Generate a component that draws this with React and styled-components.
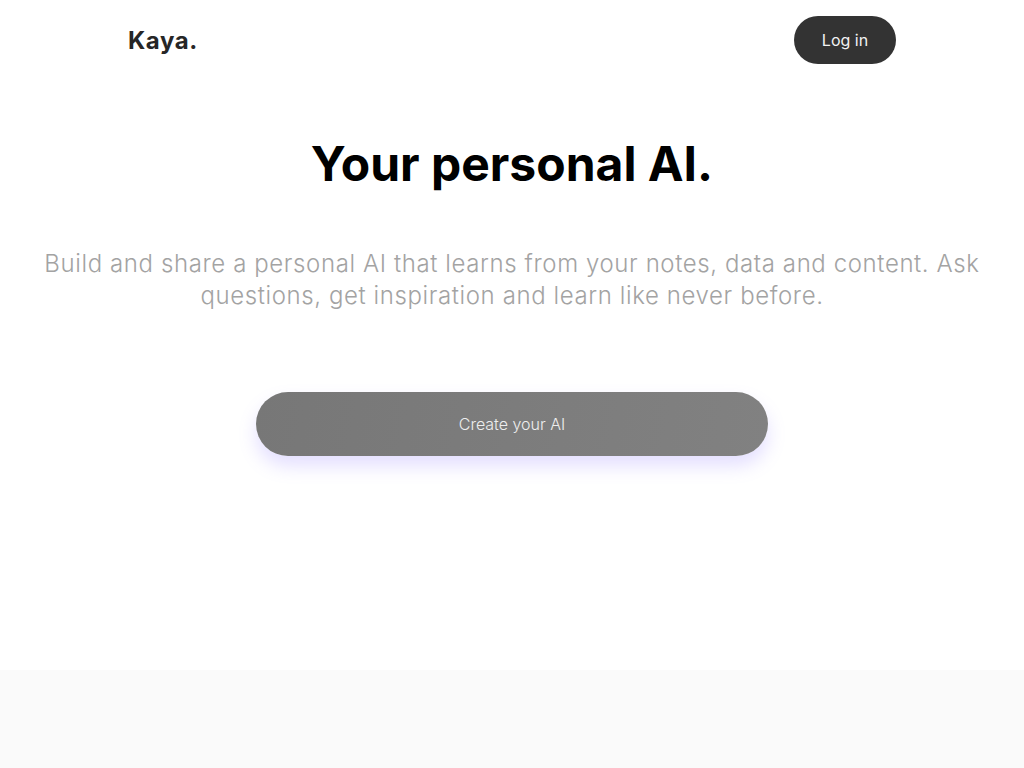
import React from 'react';
import styled, { createGlobalStyle } from 'styled-components';

const GlobalStyle = createGlobalStyle`
  * { box-sizing: border-box; }
  body {
    margin: 0;
    background: #ffffff;
    font-family: Inter, "Noto Sans", sans-serif;
  }
`

const Page = styled.div`
  display: flex;
  flex-direction: column;
  min-height: 768px;
`

const Hero = styled.section`
  height: 670px;
  display: flex;
  flex-direction: column;
  align-items: center;
`

const Nav = styled.nav`
  width: 768px;
  height: 80px;
  display: flex;
  align-items: center;
  justify-content: space-between;
`

const Logo = styled.div`
  font-size: 24px;
  font-weight: 700;
  color: #262626;
  letter-spacing: 0.6px;
`

const LoginBtn = styled.button`
  width: 102px;
  height: 48px;
  border: none;
  border-radius: 24px;
  background: #333333;
  color: #f2f2f2;
  font-family: Inter, "Noto Sans", sans-serif;
  font-size: 16px;
  cursor: pointer;
`

const Title = styled.h1`
  margin: 55px 0 0;
  font-size: 48px;
  font-weight: 700;
  line-height: 58px;
  color: #000;
  letter-spacing: 0;
`

const Subtitle = styled.p`
  margin: 55px 0 0;
  width: 1000px;
  text-align: center;
  font-size: 24px;
  font-weight: 300;
  line-height: 32px;
  color: #a3a3a3;
  letter-spacing: 0.6px;
`

const CreateBtn = styled.button`
  margin-top: 80px;
  width: 512px;
  height: 64px;
  border: none;
  border-radius: 32px;
  background: linear-gradient(100deg, #777777, #818181);
  color: #eeeeee;
  font-family: Inter, "Noto Sans", sans-serif;
  font-size: 16px;
  font-weight: 300;
  cursor: pointer;
  box-shadow: 0 10px 18px rgba(130, 110, 255, 0.22);
`

const Footer = styled.section`
  flex: 1;
  background: #fafafa;
`

export default function App() {
  return (
    <>
      <GlobalStyle />
      <Page>
        <Hero>
          <Nav>
            <Logo>Kaya.</Logo>
            <LoginBtn>Log in</LoginBtn>
          </Nav>
          <Title>Your personal AI.</Title>
          <Subtitle>
            Build and share a personal AI that learns from your notes, data and content. Ask questions, get inspiration and learn like never before.
          </Subtitle>
          <CreateBtn>Create your AI</CreateBtn>
        </Hero>
        <Footer />
      </Page>
    </>
  );
}
